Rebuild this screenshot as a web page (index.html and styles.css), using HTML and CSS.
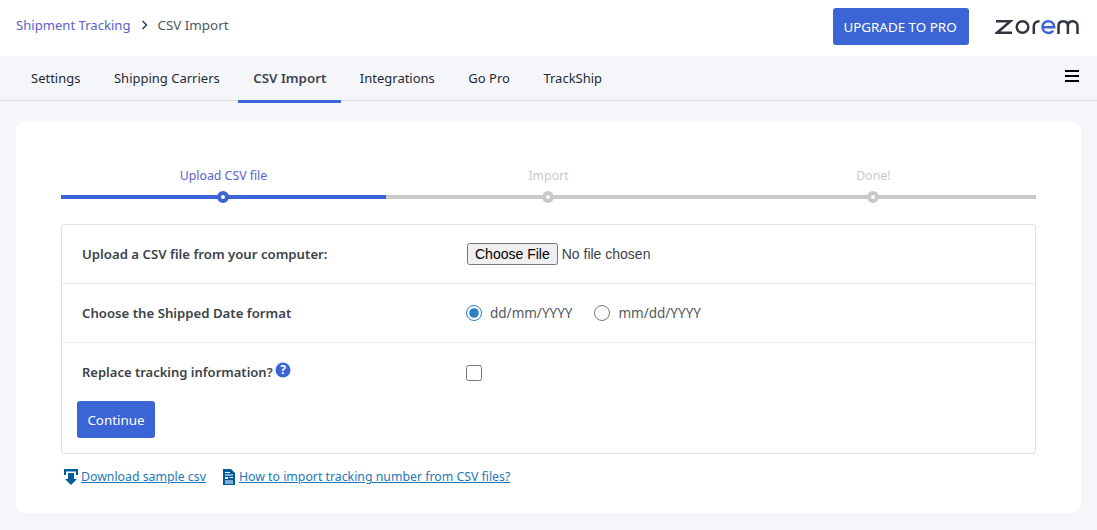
FILE: index.html
```html
<!DOCTYPE html>
<html lang="en">
<head>
<meta charset="utf-8">
<title>CSV Import</title>
<link rel="stylesheet" href="styles.css">
</head>
<body>
<header class="topbar">
  <nav class="crumbs">
    <a class="crumb-link" href="#">Shipment Tracking</a>
    <svg class="crumb-sep" width="8" height="10" viewBox="0 0 8 10"><path d="M1.500 1l4 4-4 4" fill="none" stroke="#3c434a" stroke-width="1.6"/></svg>
    <span class="crumb-current">CSV Import</span>
  </nav>
  <div class="top-actions">
    <a class="btn btn-upgrade" href="#">UPGRADE TO PRO</a>
    <svg class="logo" width="86" height="16" viewBox="0 0 86 16" fill="none" stroke-width="2.5" aria-label="zorem">
      <path d="M1 2.200h14.500L2 13.800h15" stroke="#2f3640"/>
      <circle cx="27.500" cy="8" r="5.800" stroke="#2f3640"/>
      <path d="M38.800 15V7.500c0-3 2-5.300 5.700-5.300" stroke="#2f3640"/>
      <path d="M47.500 8.200h11.700c0-3.400-2.500-5.900-5.900-5.900s-5.800 2.500-5.800 5.800 2.500 5.800 5.800 5.800c2 0 3.800-.8 4.800-2.300" stroke="#3b64d4"/>
      <path d="M63.500 15V7c0-2.800 1.800-4.800 4.700-4.800s4.700 2 4.700 4.800v8M72.900 7c0-2.800 1.800-4.800 4.700-4.800s4.900 2 4.900 4.800v8" stroke="#2f3640"/>
    </svg>
  </div>
</header>
<div class="tabs">
  <ul class="tab-list">
    <li class="tab">Settings</li>
    <li class="tab">Shipping Carriers</li>
    <li class="tab tab-active">CSV Import</li>
    <li class="tab">Integrations</li>
    <li class="tab">Go Pro</li>
    <li class="tab">TrackShip</li>
  </ul>
  <svg class="menu-icon" width="14" height="12" viewBox="0 0 14 12"><path d="M0 0h14v2H0zM0 5h14v2H0zM0 10h14v2H0z" fill="#000"/></svg>
</div>
<main class="card">
  <ol class="steps">
    <li class="step step-done"><span class="step-label">Upload CSV file</span><span class="step-track"><span class="step-dot"></span></span></li>
    <li class="step"><span class="step-label">Import</span><span class="step-track"><span class="step-dot"></span></span></li>
    <li class="step"><span class="step-label">Done!</span><span class="step-track"><span class="step-dot"></span></span></li>
  </ol>
  <section class="panel">
    <div class="row">
      <label class="row-label">Upload a CSV file from your computer:</label>
      <div class="row-field"><input class="file" type="file"></div>
    </div>
    <div class="row">
      <label class="row-label">Choose the Shipped Date format</label>
      <div class="row-field radios">
        <label class="radio"><input type="radio" name="fmt" checked>dd/mm/YYYY</label>
        <label class="radio"><input type="radio" name="fmt">mm/dd/YYYY</label>
      </div>
    </div>
    <div class="row row-last">
      <label class="row-label row-label-tight">Replace tracking information?<svg class="help" width="16" height="16" viewBox="0 0 16 16"><circle cx="8" cy="8" r="7.500" fill="#3b64d4"/><text x="8" y="12" text-anchor="middle" class="help-q">?</text></svg></label>
      <div class="row-field"><input class="check" type="checkbox"></div>
    </div>
    <div class="actions"><button class="btn btn-continue" type="button">Continue</button></div>
  </section>
  <div class="links">
    <svg class="link-icon" width="14" height="16" viewBox="0 0 14 16"><path d="M0 0h14v6h-2V2.500H2V6H0z" fill="#005b9a"/><path d="M4 4h6v6h3l-6 6-6-6h3z" fill="#005b9a"/></svg>
    <a class="link" href="#">Download sample csv</a>
    <svg class="link-icon link-icon-doc" width="12" height="16" viewBox="0 0 12 16"><path d="M0 0h8l4 4v12H0z" fill="#005b9a"/><path d="M2 3h5v1H2zM2 5.500h8v1H2zM2 8h3v2H2zM6.500 8H10v1H6.500zM2 11.500h8v1H2zM2 13.500h8v1H2z" fill="#fff"/></svg>
    <a class="link" href="#">How to import tracking number from CSV files?</a>
  </div>
</main>
</body>
</html>
```

FILE: styles.css
```css
* { box-sizing: border-box; }
html, body { margin: 0; padding: 0; }
body {
  background: #f5f6fa;
  font-family: "Noto Sans", "Open Sans", sans-serif;
  font-size: 13.1px;
  color: #3c434a;
  height: 530px;
  overflow: hidden;
}
a { text-decoration: none; }
.topbar {
  height: 56px;
  background: #fff;
  display: flex;
  align-items: center;
  justify-content: space-between;
  padding: 0 16px;
}
.crumbs { display: flex; align-items: center; margin-top: -7px; }
.crumb-link { color: #5b61cf; }
.crumb-sep { margin: 1px 8px 0 11px; }
.crumb-current { color: #50575e; font-size: 13.4px; }
.top-actions { display: flex; align-items: center; margin-top: -3px; }
.btn {
  background: #3b64d4;
  color: #fff;
  border: 0;
  border-radius: 3px;
  font-family: inherit;
  font-size: 13.4px;
  display: inline-flex;
  align-items: center;
  justify-content: center;
}
.btn-upgrade { width: 136px; height: 37px; padding-right: 2px; }
.logo { margin-left: 26px; }
.tabs {
  height: 45px;
  border-bottom: 1px solid #dcdde0;
  display: flex;
  align-items: flex-start;
  justify-content: space-between;
  padding: 0 18px 0 16px;
}
.tab-list { list-style: none; margin: 0; padding: 0; display: flex; gap: 3.5px; }
.tab {
  height: 47px;
  padding: 0 15px;
  font-size: 13px;
  line-height: 44px;
  color: #1d2b36;
  white-space: nowrap;
  border-bottom: 3px solid transparent;
}
.tab-active { font-size: 13.3px; font-weight: 600; color: #3c434a; border-bottom-color: #3b64d4; }
.menu-icon { margin-top: 14px; }
.card {
  margin: 20px 16px 0;
  height: 392px;
  background: #fff;
  border-radius: 10px;
  padding: 45px 45px 0;
}
.steps {
  list-style: none;
  margin: 0;
  padding: 0;
  display: grid;
  grid-template-columns: repeat(3, 1fr);
}
.step { display: flex; flex-direction: column; align-items: center; color: #c9c9c9; font-size: 12.3px; }
.step-done { color: #5b61cf; }
.step-label { line-height: 18px; height: 20px; margin-top: 1px; }
.step-track {
  display: flex;
  justify-content: center;
  align-items: center;
  align-self: stretch;
  height: 4px;
  margin-top: 8px;
  background: #c9c9c9;
}
.step-done .step-track { background: #3b64d4; }
.step-dot {
  width: 12px;
  height: 12px;
  margin-right: 1px;
  border-radius: 50%;
  background: #fff;
  border: 4px solid #c9c9c9;
}
.step-done .step-dot { border-color: #3b64d4; }
.panel {
  margin-top: 25px;
  height: 230px;
  border: 1px solid #e0e0e0;
  border-radius: 3px;
}
.row {
  height: 59px;
  display: flex;
  align-items: center;
  padding-left: 20px;
  border-bottom: 1px solid #ececec;
}
.row-last { border-bottom: 0; height: 58px; }
.row-label {
  width: 384px;
  font-weight: 600;
  font-size: 13.2px;
  color: #3c434a;
  display: flex;
  align-items: center;
}
.row-label-tight { font-size: 13px; }
.row-field { display: flex; align-items: center; }
.file { font-family: "Liberation Sans", Arial, sans-serif; font-size: 14px; color: #3c434a; width: 240px; margin-left: 1px; }
.radios { gap: 22px; }
.radio { display: flex; align-items: center; color: #50575e; font-size: 13.5px; }
.radio input { width: 16px; height: 16px; margin: 0 8px 0 0; accent-color: #2d7fc9; }
.check { width: 16px; height: 16px; margin: 2px 0 0; }
.help { margin: -4px 0 0 2px; }
.help-q { fill: #fff; font-size: 12px; font-weight: 700; font-family: "Noto Sans", sans-serif; }
.actions { padding: 0 0 0 15px; }
.btn-continue { width: 78px; height: 37px; }
.links { display: flex; align-items: center; margin-top: 14px; padding-left: 3px; font-size: 12.3px; }
.link { color: #1d77b8; text-decoration: underline; }
.link-icon { margin-right: 3px; }
.link-icon-doc { margin-left: 17px; margin-right: 4px; }
```
